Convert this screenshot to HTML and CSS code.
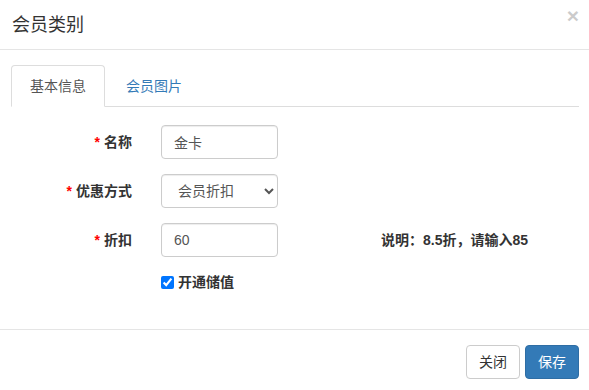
FILE: index.html
```html
<!DOCTYPE html>
<html lang="zh-CN">
<head>
  <meta charset="UTF-8" />
  <meta name="viewport" content="width=device-width, initial-scale=1.0"/>
  <title>会员类别</title>
  <link rel="stylesheet" href="styles.css">
</head>
<body>

  <div class="modal">
    <div class="modal-header">
      <h4 class="modal-title">会员类别</h4>
      <button class="close" type="button">&times;</button>
    </div>

    <div class="modal-body">
      <ul class="nav-tabs">
        <li class="active"><a href="#">基本信息</a></li>
        <li><a href="#">会员图片</a></li>
      </ul>

      <form class="form">
        <div class="form-row">
          <label class="form-label"><span class="req">*</span>名称</label>
          <input class="form-control" type="text" value="金卡">
        </div>
        <div class="form-row">
          <label class="form-label"><span class="req">*</span>优惠方式</label>
          <select class="form-control">
            <option>会员折扣</option>
            <option>会员价</option>
          </select>
        </div>
        <div class="form-row">
          <label class="form-label"><span class="req">*</span>折扣</label>
          <input class="form-control" type="text" value="60">
          <span class="hint">说明：8.5折，请输入85</span>
        </div>
        <div class="form-row check-row">
          <span class="form-label"></span>
          <label class="check"><input type="checkbox" checked> 开通储值</label>
        </div>
      </form>
    </div>

    <div class="modal-footer">
      <button class="btn btn-default" type="button">关闭</button>
      <button class="btn btn-primary" type="button">保存</button>
    </div>
  </div>

</body>
</html>
```

FILE: styles.css
```css
* {
  box-sizing: border-box;
}
body {
  margin: 0;
  background: #fff;
  color: #333;
  font-family: "Liberation Sans", "Noto Sans CJK SC", sans-serif;
  font-size: 14px;
  line-height: 20px;
}
.modal {
  width: 589px;
  height: 390px;
}
.modal-header {
  display: flex;
  justify-content: space-between;
  align-items: center;
  height: 50px;
  padding: 0 10px 0 12px;
  border-bottom: 1px solid #e5e5e5;
}
.modal-title {
  margin: 0;
  font-size: 18px;
  font-weight: normal;
  line-height: 24px;
}
.close {
  align-self: flex-start;
  margin-top: 5px;
  padding: 0;
  border: 0;
  background: none;
  font-family: "Liberation Sans", sans-serif;
  font-size: 21px;
  font-weight: bold;
  line-height: 21px;
  color: #000;
  opacity: .2;
}
.modal-body {
  height: 279px;
  padding: 15px 10px 0 11px;
}
.nav-tabs {
  display: flex;
  margin: 0;
  padding: 0;
  list-style: none;
  border-bottom: 1px solid #ddd;
}
.nav-tabs li {
  margin-right: 2px;
  margin-bottom: -1px;
}
.nav-tabs a {
  display: block;
  padding: 10px 18px;
  border: 1px solid transparent;
  border-radius: 4px 4px 0 0;
  color: #337ab7;
  text-decoration: none;
}
.nav-tabs .active a {
  color: #555;
  background: #fff;
  border-color: #ddd #ddd transparent;
}
.form {
  padding-top: 18px;
}
.form-row {
  display: flex;
  align-items: center;
  margin-bottom: 15px;
}
.form-label {
  width: 121px;
  margin-right: 29px;
  text-align: right;
  font-weight: bold;
}
.req {
  color: #f00;
  margin-right: 4px;
}
.form-control {
  width: 117px;
  height: 34px;
  padding: 6px 12px;
  border: 1px solid #ccc;
  border-radius: 4px;
  background: #fff;
  color: #555;
  font-family: inherit;
  font-size: 14px;
  box-shadow: inset 0 1px 1px rgba(0, 0, 0, .075);
}
.hint {
  margin-left: 103px;
  font-weight: bold;
}
.check-row {
  margin-top: 2px;
}
.check {
  display: flex;
  align-items: center;
  font-weight: bold;
}
.check input {
  width: 13px;
  height: 13px;
  margin: 0 4px 0 0;
}
.modal-footer {
  display: flex;
  justify-content: flex-end;
  gap: 5px;
  padding: 15px 10px;
  border-top: 1px solid #e5e5e5;
}
.btn {
  height: 34px;
  padding: 6px 12px;
  border: 1px solid transparent;
  border-radius: 4px;
  font-family: inherit;
  font-size: 14px;
  line-height: 20px;
}
.btn-default {
  color: #333;
  background: #fff;
  border-color: #ccc;
}
.btn-primary {
  color: #fff;
  background: #337ab7;
  border-color: #2e6da4;
}
```
